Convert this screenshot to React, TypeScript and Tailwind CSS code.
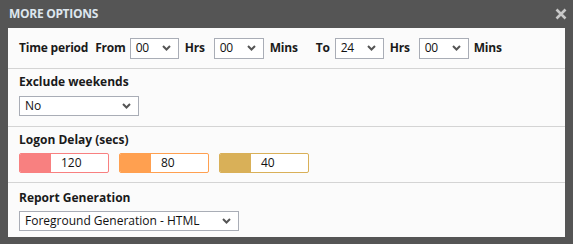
import React from 'react';

const font = { fontFamily: '"Open Sans", "Liberation Sans", sans-serif' };

function Chevron() {
  return (
    <svg width="9" height="6" viewBox="0 0 9 6" className="shrink-0">
      <path d="M1 1 L4.5 4.5 L8 1" fill="none" stroke="#555" strokeWidth="2" />
    </svg>
  );
}

function Select({ value, width, height = 'h-[21px]' }: { value: string; width: string; height?: string }) {
  return (
    <div
      className={`flex items-center justify-between ${width} ${height} border border-[#a9adb6] bg-white pl-[5px] pr-[7px] text-[12px] text-[#111]`}
    >
      <span>{value}</span>
      <Chevron />
    </div>
  );
}

function DelayBox({ color, border, value }: { color: string; border: string; value: string }) {
  return (
    <div className={`flex h-[20px] w-[90px] overflow-hidden rounded-[2px] border ${border} bg-white`}>
      <div className={`w-[31px] ${color}`} />
      <span className="pl-[10px] text-[12px] leading-[18px] text-[#111]">{value}</span>
    </div>
  );
}

export default function App() {
  return (
    <div className="h-[244px] w-[573px] bg-[#555555] px-[8px]" style={font}>
      <div className="flex h-[28px] items-center justify-between">
        <span className="pl-[1px] text-[12px] font-bold tracking-[-0.3px] text-[#dde6ee]">MORE OPTIONS</span>
        <svg width="12" height="12" viewBox="0 0 12 12" className="mr-[-2px]">
          <path d="M1.5 1.5 L10.5 10.5 M10.5 1.5 L1.5 10.5" stroke="#c8c8c8" strokeWidth="2.6" />
        </svg>
      </div>
      <div className="h-[209px] bg-[#fbfbfb] text-[12px] text-[#1a1a1a]">
        <div className="flex h-[41px] items-center border-b border-[#d4d4d4] pl-[11px] font-bold tracking-[-0.2px]">
          <span>Time period</span>
          <span className="ml-[7px]">From</span>
          <div className="ml-[4px] font-normal"><Select value="00" width="w-[49px]" /></div>
          <span className="ml-[6px]">Hrs</span>
          <div className="ml-[9px] font-normal"><Select value="00" width="w-[50px]" /></div>
          <span className="ml-[6px]">Mins</span>
          <span className="ml-[18px]">To</span>
          <div className="ml-[5px] font-normal"><Select value="24" width="w-[49px]" /></div>
          <span className="ml-[6px]">Hrs</span>
          <div className="ml-[9px] font-normal"><Select value="00" width="w-[50px]" /></div>
          <span className="ml-[5px]">Mins</span>
        </div>
        <div className="h-[58px] border-b border-[#d4d4d4] pl-[11px] pt-[5px]">
          <div className="font-bold leading-[16px]">Exclude weekends</div>
          <div className="mt-[6px]"><Select value="No" width="w-[120px]" height="h-[20px]" /></div>
        </div>
        <div className="h-[56px] border-b border-[#d4d4d4] pl-[11px] pt-[5px]">
          <div className="font-bold leading-[16px]">Logon Delay (secs)</div>
          <div className="mt-[5px] flex gap-[10px]">
            <DelayBox color="bg-[#f88080]" border="border-[#f88080]" value="120" />
            <DelayBox color="bg-[#ffa050]" border="border-[#ffa050]" value="80" />
            <DelayBox color="bg-[#d9b058]" border="border-[#d9b058]" value="40" />
          </div>
        </div>
        <div className="pl-[11px] pt-[7px]">
          <div className="font-bold leading-[16px]">Report Generation</div>
          <div className="mt-[5px]"><Select value="Foreground Generation - HTML" width="w-[220px]" height="h-[20px]" /></div>
        </div>
      </div>
    </div>
  );
}
